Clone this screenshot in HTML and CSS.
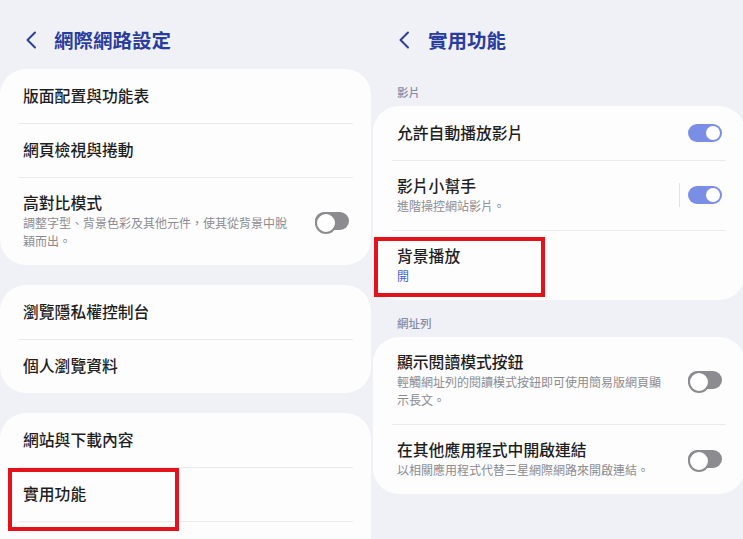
FILE: index.html
```html
<!DOCTYPE html>
<html lang="zh-Hant">
<head>
  <meta charset="UTF-8">
  <meta name="viewport" content="width=device-width, initial-scale=1.0">
  <title>網際網路設定 / 實用功能</title>
  <link rel="stylesheet" href="styles.css">
</head>
<body>
  <div class="screens">
    <section class="panel panel-left">
      <header class="appbar">
        <svg class="back" width="12" height="18" viewBox="0 0 12 18"><path d="M10 1.5 L2.5 9 L10 16.5" fill="none" stroke="#2b3c9f" stroke-width="2" stroke-linecap="round" stroke-linejoin="round"/></svg>
        <h1>網際網路設定</h1>
      </header>

      <div class="card">
        <div class="row"><div class="text"><p class="label">版面配置與功能表</p></div></div>
        <div class="row"><div class="text"><p class="label">網頁檢視與捲動</p></div></div>
        <div class="row multi">
          <div class="text">
            <p class="label">高對比模式</p>
            <p class="sub">調整字型、背景色彩及其他元件，使其從背景中脫穎而出。</p>
          </div>
          <span class="switch off"></span>
        </div>
      </div>

      <div class="card">
        <div class="row"><div class="text"><p class="label">瀏覽隱私權控制台</p></div></div>
        <div class="row"><div class="text"><p class="label">個人瀏覽資料</p></div></div>
      </div>

      <div class="card">
        <div class="row"><div class="text"><p class="label">網站與下載內容</p></div></div>
        <div class="row"><div class="text"><p class="label">實用功能</p></div></div>
        <div class="row"><div class="text"><p class="label">&nbsp;</p></div></div>
      </div>

      <div class="mark mark-left"></div>
    </section>

    <section class="panel panel-right">
      <header class="appbar">
        <svg class="back" width="12" height="18" viewBox="0 0 12 18"><path d="M10 1.5 L2.5 9 L10 16.5" fill="none" stroke="#2b3c9f" stroke-width="2" stroke-linecap="round" stroke-linejoin="round"/></svg>
        <h1>實用功能</h1>
      </header>

      <h2 class="section">影片</h2>
      <div class="card">
        <div class="row">
          <div class="text"><p class="label">允許自動播放影片</p></div>
          <span class="switch on"></span>
        </div>
        <div class="row multi">
          <div class="text">
            <p class="label">影片小幫手</p>
            <p class="sub">進階操控網站影片。</p>
          </div>
          <span class="vline"></span>
          <span class="switch on"></span>
        </div>
        <div class="row multi">
          <div class="text">
            <p class="label">背景播放</p>
            <p class="sub value">開</p>
          </div>
        </div>
      </div>

      <h2 class="section">網址列</h2>
      <div class="card">
        <div class="row multi">
          <div class="text">
            <p class="label">顯示閱讀模式按鈕</p>
            <p class="sub">輕觸網址列的閱讀模式按鈕即可使用簡易版網頁顯示長文。</p>
          </div>
          <span class="switch off"></span>
        </div>
        <div class="row multi">
          <div class="text">
            <p class="label">在其他應用程式中開啟連結</p>
            <p class="sub">以相關應用程式代替三星網際網路來開啟連結。</p>
          </div>
          <span class="switch off"></span>
        </div>
      </div>

      <div class="mark mark-right"></div>
    </section>
  </div>
</body>
</html>
```

FILE: styles.css
```css
* {
  margin: 0;
  padding: 0;
  box-sizing: border-box;
}
body {
  background-color: #f0f1f6;
  font-family: "Noto Sans CJK TC", "Noto Sans", sans-serif;
  color: #1e1e1e;
}
.screens {
  display: grid;
  grid-template-columns: 372px 371px;
  height: 539px;
  overflow: hidden;
}
.panel {
  position: relative;
  overflow: hidden;
}
.appbar {
  height: 69px;
  display: flex;
  align-items: flex-start;
  gap: 17px;
  padding: 30px 0 0 25px;
}
.panel-right .appbar {
  padding-left: 26px;
  gap: 18px;
}
.back {
  margin-top: 1px;
  flex-shrink: 0;
}
h1 {
  font-size: 19.5px;
  line-height: 20px;
  font-weight: 700;
  color: #2b3c9f;
}
.section {
  font-size: 11.5px;
  font-weight: 500;
  line-height: 16px;
  color: #838aa8;
  padding: 15px 0 6px 25px;
}
.card {
  background-color: #fdfdfe;
  border-radius: 26px;
  margin-bottom: 20px;
}
.panel-left .card {
  width: 371px;
}
.panel-right .card {
  width: 372px;
  margin-left: 1px;
  margin-bottom: 0;
}
.row {
  display: flex;
  align-items: center;
  margin: 0 18px;
  padding: 16px 4px 16px 5px;
}
.panel-right .row {
  margin: 0 19px;
}
.row + .row {
  border-top: 1px solid #e9e9ee;
  padding-top: 15px;
}
.row.multi {
  padding-top: 14px;
  padding-bottom: 15px;
}
.text {
  flex: 1;
  min-width: 0;
  margin-right: 24px;
}
.label {
  font-size: 15.8px;
  line-height: 22px;
  font-weight: 500;
  color: #1e1e1e;
}
.sub {
  font-size: 12px;
  line-height: 18px;
  color: #8c8c90;
}
.value {
  color: #4b5fd1;
}
.vline {
  width: 1px;
  height: 24px;
  background-color: #e1e1e6;
  margin-right: 8px;
  margin-left: -16px;
}
.switch {
  position: relative;
  width: 34px;
  height: 18px;
  border-radius: 9px;
  flex-shrink: 0;
}
.switch::after {
  content: "";
  position: absolute;
  border-radius: 50%;
  background-color: #fff;
}
.switch.on {
  background-color: #7b8ee6;
}
.switch.on::after {
  top: 2px;
  right: 2px;
  width: 14px;
  height: 14px;
}
.switch.off {
  background-color: #8b8b90;
}
.switch.off::after {
  top: 0;
  left: 0;
  width: 18px;
  height: 18px;
  border: 2px solid #8b8b90;
}
.mark {
  position: absolute;
  border: 4px solid #e3121b;
}
.mark-left {
  left: 8px;
  top: 468px;
  width: 171px;
  height: 63px;
}
.mark-right {
  left: 2px;
  top: 237px;
  width: 171px;
  height: 60px;
}
```
